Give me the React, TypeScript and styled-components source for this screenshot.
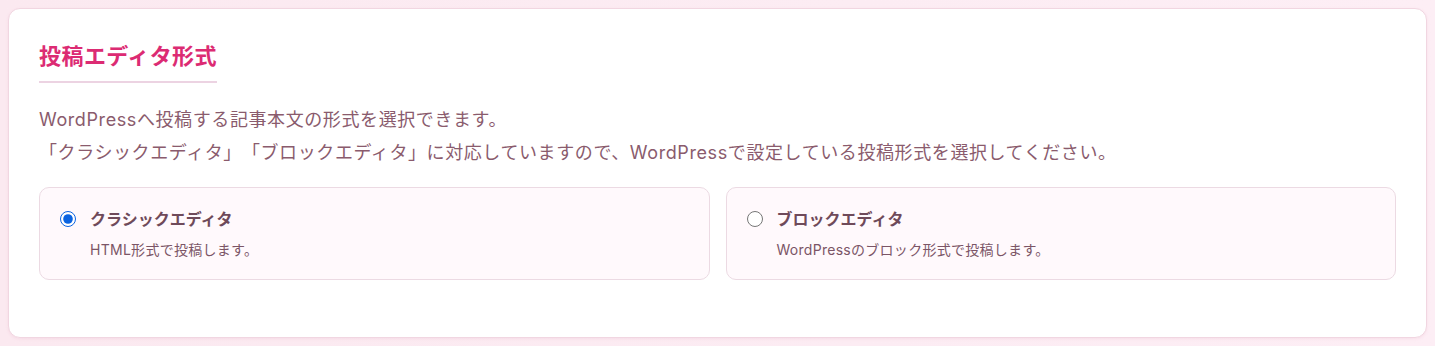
import React, { useState } from "react";
import styled, { createGlobalStyle } from "styled-components";

const Global = createGlobalStyle`
  html, body { margin: 0; padding: 0; }
  body {
    padding: 8px;
    min-height: 346px;
    box-sizing: border-box;
    background: linear-gradient(90deg, #fbe9f0 0%, #fcecf3 60%, #fdeef5 100%);
    font-family: "Inter", "Noto Sans CJK JP", sans-serif;
    text-spacing-trim: space-all;
  }
`;

const Panel = styled.section`
  background: #ffffff;
  border: 1px solid #f1d6e1;
  border-radius: 12px;
  box-shadow: 0 1px 3px rgba(214, 120, 160, 0.12);
  padding: 30px 30px 57px;
`;

const Title = styled.h2`
  display: inline-block;
  margin: 0;
  padding-bottom: 8px;
  border-bottom: 2px solid #ecd3e2;
  font-size: 22px;
  line-height: 34px;
  font-weight: 700;
  letter-spacing: 0.02em;
  color: #dc2b73;
`;

const Description = styled.p`
  margin: 19.5px 0 17.5px;
  font-size: 18px;
  line-height: 33.5px;
  letter-spacing: 0.033em;
  color: #8a5b6d;
`;

const Options = styled.div`
  display: grid;
  grid-template-columns: 1fr 1fr;
  gap: 16px;
`;

const OptionCard = styled.label`
  display: flex;
  align-items: flex-start;
  gap: 14px;
  padding: 20px 20px 19px;
  background: #fff9fc;
  border: 1px solid #ecdae3;
  border-radius: 10px;
  cursor: pointer;
`;

const Radio = styled.input`
  width: 16px;
  height: 16px;
  margin: 3px 0 0;
  flex: none;
  accent-color: #0a63e0;
`;

const OptionText = styled.div`
  display: flex;
  flex-direction: column;
  gap: 8.5px;
`;

const OptionLabel = styled.span`
  font-size: 16px;
  line-height: 22px;
  font-weight: 700;
  color: #6f4a5a;
`;

const OptionNote = styled.span`
  font-size: 14px;
  line-height: 21px;
  letter-spacing: 0.02em;
  color: #7b5566;
`;

const options = [
  { value: "classic", label: "クラシックエディタ", note: "HTML形式で投稿します。" },
  { value: "block", label: "ブロックエディタ", note: "WordPressのブロック形式で投稿します。" },
];

export default function App() {
  const [mode, setMode] = useState("classic");
  return (
    <>
      <Global />
      <Panel>
        <Title>投稿エディタ形式</Title>
        <Description>
          WordPressへ投稿する記事本文の形式を選択できます。
          <br />
          「クラシックエディタ」「ブロックエディタ」に対応していますので、WordPressで設定している投稿形式を選択してください。
        </Description>
        <Options>
          {options.map((o) => (
            <OptionCard key={o.value}>
              <Radio
                type="radio"
                name="editor"
                value={o.value}
                checked={mode === o.value}
                onChange={() => setMode(o.value)}
              />
              <OptionText>
                <OptionLabel>{o.label}</OptionLabel>
                <OptionNote>{o.note}</OptionNote>
              </OptionText>
            </OptionCard>
          ))}
        </Options>
      </Panel>
    </>
  );
}
